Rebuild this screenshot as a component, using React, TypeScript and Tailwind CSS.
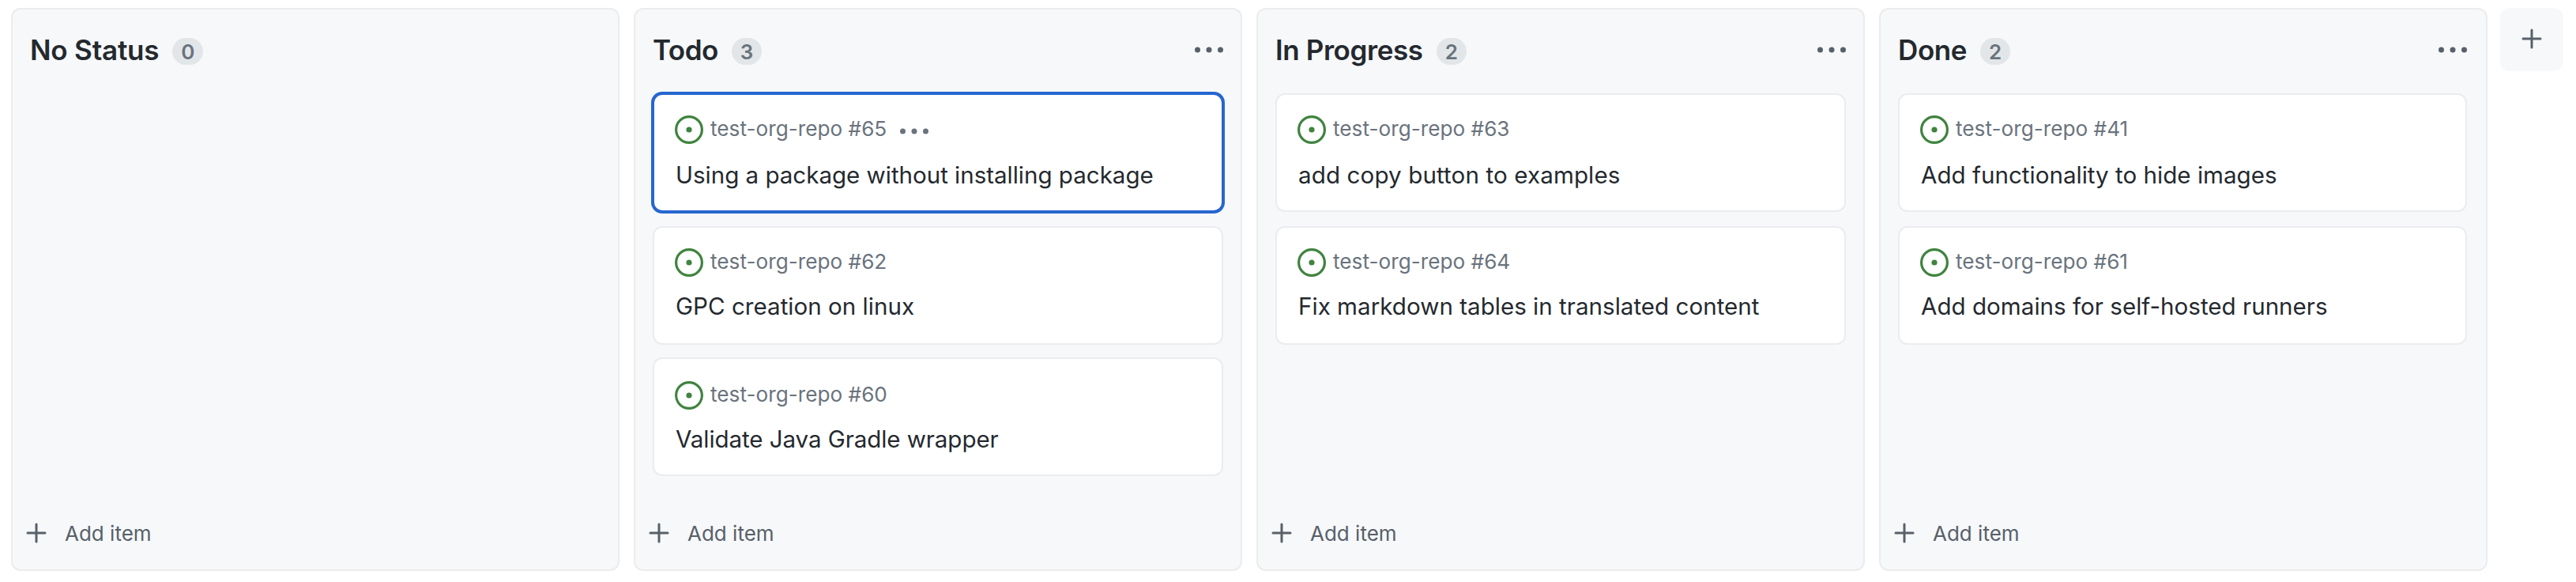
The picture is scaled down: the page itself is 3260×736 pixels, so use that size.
type CardData = { id: number; title: string; selected?: boolean; tracking?: string };
type ColumnData = { name: string; cards: CardData[]; tracking: string; padding: string; menu: boolean };

const columns: ColumnData[] = [
  { name: "No Status", tracking: "tracking-[-0.2px]", padding: "pr-[22px]", menu: false, cards: [] },
  {
    name: "Todo",
    tracking: "tracking-[-0.5px]",
    padding: "pr-[22px]",
    menu: true,
    cards: [
      { id: 65, title: "Using a package without installing package", selected: true, tracking: "tracking-[-0.04px]" },
      { id: 62, title: "GPC creation on linux" },
      { id: 60, title: "Validate Java Gradle wrapper", tracking: "tracking-[-0.1px]" },
    ],
  },
  {
    name: "In Progress",
    tracking: "tracking-[-0.4px]",
    padding: "pr-[22px]",
    menu: true,
    cards: [
      { id: 63, title: "add copy button to examples", tracking: "tracking-[0.1px]" },
      { id: 64, title: "Fix markdown tables in translated content" },
    ],
  },
  {
    name: "Done",
    tracking: "tracking-[-0.4px]",
    padding: "pr-6",
    menu: true,
    cards: [
      { id: 41, title: "Add functionality to hide images" },
      { id: 61, title: "Add domains for self-hosted runners" },
    ],
  },
];

// Vertical rhythm of the stacked cards.
const cardSpacing = ["pt-[26px]", "mt-[18px] pt-[26px]", "mt-4 pt-[28px]"];
const titleSpacing = ["mt-5", "mt-[18px]", "mt-[18px]"];

function Dots() {
  return (
    <svg width="36" height="8" viewBox="0 0 36 8" fill="currentColor" className="block shrink-0">
      <circle cx="3.5" cy="4" r="3.5" />
      <circle cx="18" cy="4" r="3.5" />
      <circle cx="32.5" cy="4" r="3.5" />
    </svg>
  );
}

function Plus() {
  return (
    <svg width="26" height="26" viewBox="0 0 26 26" stroke="currentColor" strokeWidth="3" strokeLinecap="round" className="block shrink-0">
      <path d="M13 2v22M2 13h22" />
    </svg>
  );
}

function IssueIcon() {
  return (
    <svg width="36" height="36" viewBox="0 0 36 36" className="block shrink-0">
      <circle cx="18" cy="18" r="16.4" fill="none" stroke="#3f833f" strokeWidth="3.2" />
      <circle cx="18" cy="18" r="3.6" fill="#3f833f" />
    </svg>
  );
}

function Card({ card, index }: { card: CardData; index: number }) {
  return (
    <article
      className={`h-[150px] rounded-xl border-2 bg-white pl-[26px] ${cardSpacing[index]} ${
        card.selected ? "border-[#2666cf] ring-2 ring-[#2666cf]" : "border-[#ebecee]"
      }`}
    >
      <div className="flex h-9 items-center text-[#6a737d]">
        <IssueIcon />
        <span className="-mt-[3px] ml-[9px] text-[26.2px] leading-9">test-org-repo #{card.id}</span>
        {card.selected && (
          <button className="mt-1 ml-[17px]">
            <Dots />
          </button>
        )}
      </div>
      <h3 className={`pl-px text-[29.6px] leading-[38px] whitespace-nowrap text-[#24292e] ${card.tracking ?? ""} ${titleSpacing[index]}`}>
        {card.title}
      </h3>
    </article>
  );
}

function Column({ column }: { column: ColumnData }) {
  return (
    <section
      className={`flex h-[712px] w-[770px] shrink-0 flex-col rounded-xl border-2 border-[#ebecee] bg-[#f6f8fa] pl-[22px] ${column.padding}`}
    >
      <header className="flex h-[106px] items-center pb-1">
        <h2 className={`text-[35px] leading-[44px] font-semibold text-[#24292e] ${column.tracking}`}>{column.name}</h2>
        <span className="mt-1 ml-[17px] flex h-[34px] min-w-[38px] items-center justify-center rounded-full bg-[#e2e6e9] px-[11px] text-[26px] font-semibold text-[#6a737d]">
          {column.cards.length}
        </span>
        {column.menu && (
          <button className="ml-auto text-[#586069]">
            <Dots />
          </button>
        )}
      </header>
      <div className="flex grow flex-col">
        {column.cards.map((card, i) => (
          <Card key={card.id} card={card} index={i} />
        ))}
      </div>
      <button className="mb-[26px] -ml-[5px] flex h-10 items-center gap-[23px] text-[#586069]">
        <Plus />
        <span className="text-[26px]">Add item</span>
      </button>
    </section>
  );
}

export default function App() {
  return (
    <main className="flex h-[736px] w-[3260px] overflow-hidden bg-white pt-[10px] pl-[14px] font-['Inter','Liberation_Sans',sans-serif]">
      <div className="flex gap-[18px]">
        {columns.map((column) => (
          <Column key={column.name} column={column} />
        ))}
      </div>
      <button className="ml-4 flex size-20 shrink-0 items-start justify-center rounded-xl bg-[#f6f8fa] pt-[26px] text-[#586069]">
        <Plus />
      </button>
    </main>
  );
}
